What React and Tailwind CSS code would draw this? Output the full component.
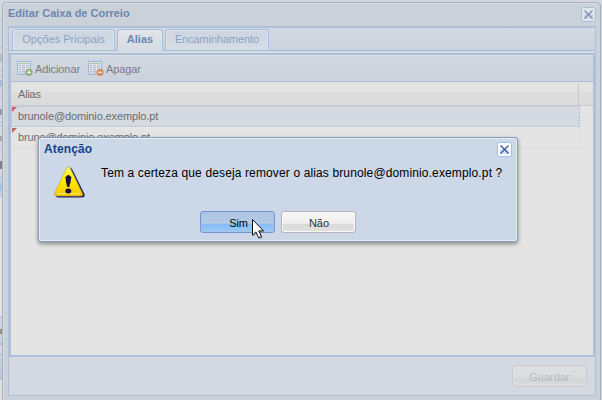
import React from "react";

function CloseBox({ bright }) {
  return (
    <svg className="block h-[15px] w-[15px] shrink-0" viewBox="0 0 15 15">
      <rect x="0.5" y="0.5" width="14" height="14" rx="2" fill={bright ? "#fbfdff" : "#e1e5ea"} stroke={bright ? "#9cc0ec" : "#a9bedb"} />
      <rect x="3" y="7" width="9" height="5" fill={bright ? "#d5e6fa" : "#ccd7e3"} />
      <path d="M3.5 3.5l8 8M11.5 3.5l-8 8" stroke={bright ? "#34539f" : "#7f8db6"} strokeWidth="1.3" />
    </svg>
  );
}

function TableIcon({ remove }) {
  return (
    <svg className="block h-4 w-4 shrink-0" viewBox="0 0 16 16">
      <rect x="0.5" y="1.5" width="13" height="13" fill="#dfe2e6" stroke="#9fb5d5" />
      <path d="M2 3.5h10" stroke="#a6c998" />
      <path d="M2 5.5h2M5 5.5h3M9 5.5h3M2 7.5h2M5 7.5h3M9 7.5h3M2 9.5h2M5 9.5h3M2 11.5h2M5 11.5h3M2 13h2M5 13h3" stroke="#b3bbc8" />
      <circle cx="12" cy="12.3" r="3.6" fill={remove ? "#d98b62" : "#8aae78"} />
      <path d={remove ? "M10 12.3h4" : "M10 12.3h4M12 10.3v4"} stroke="#eceee8" strokeWidth="1.2" />
    </svg>
  );
}

function WarningIcon() {
  return (
    <svg className="block h-8 w-8 shrink-0" viewBox="0 0 32 32">
      <defs>
        <linearGradient id="yellow" x1="0" y1="0" x2="0" y2="1">
          <stop offset="0" stopColor="#fff568" />
          <stop offset="0.45" stopColor="#fff000" />
          <stop offset="1" stopColor="#f3c500" />
        </linearGradient>
      </defs>
      <path d="M14.5 1.8Q17 .8 18.3 3.5L30.5 28Q31.3 31.5 28 31.5H4Q2 31.5 1.5 29Z" fill="#25205c" />
      <path d="M12.8 1.5Q14.5-.2 16.2 2L28.4 27.5Q29.5 30 26.5 30H2.5Q-.5 30 .6 27.2Z" fill="url(#yellow)" stroke="#b5a13b" strokeWidth=".6" />
      <path d="M3 27.6h23" stroke="#ffe75a" strokeWidth="1.3" />
      <path d="M11.5 11.2Q14.3 7 17.2 11.2Q17 16 15.2 21h-1.9Q11.5 16 11.5 11.2Z" fill="#1b113e" />
      <ellipse cx="14.3" cy="25" rx="3" ry="2.5" fill="#1b113e" />
    </svg>
  );
}

function Tab({ label, active, className }) {
  return (
    <div className={`rounded-t-[3px] border border-b-0 border-[#a9bedb] ${active ? "h-[22px] bg-[linear-gradient(#e1e4e7,#d5dce4)] font-bold text-[#6c87b3]" : "h-[21px] bg-[linear-gradient(#ccd5e0,#d7dde5)] text-[#8ba1c4]"} shadow-[inset_1px_1px_#e0e4e8,inset_-1px_0_#e0e4e8] text-center leading-[19px] ${className}`}>
      {label}
    </div>
  );
}

function Row({ text, selected }) {
  return (
    <div className={`relative h-[21px] w-[569px] border pl-[6px] leading-[18px] tracking-[-0.115px] text-[#6c6c6c] ${selected ? "border-dotted border-[#b3bacb] bg-[#d4d9e2]" : "border-[#dcdcdc] border-t-[#e8e8e8] border-l-transparent"}`}>
      <span className="absolute left-0 top-0 h-[5px] w-[5px] bg-[#cb6060] [clip-path:polygon(0_0,100%_0,0_100%)]" />
      {text}
    </div>
  );
}

export default function App() {
  return (
    <div className="relative flex h-[400px] w-[602px] overflow-hidden bg-[#c7ced8] font-['Liberation_Sans',Arial,sans-serif] text-[11px]">
      <div className="flex h-[400px] w-[2px] shrink-0 flex-col bg-[#d3d8df]">
        <div className="h-[20px] border-b border-[#b3c3d8]" />
        <div className="h-[28px] border-b border-[#b3c3d8] bg-[#cdd5df]" />
        <div className="mt-[6px] h-[8px] bg-[#b4bdcb]" />
        <div className="mt-[8px] h-[7px] border-y border-[#a9bedb]" />
        <div className="mt-[3px] h-[7px] bg-[#a9bbd5]" />
        <div className="mt-[6px] h-[5px] border-y border-[#b3c3d8]" />
        <div className="mt-[11px] h-[6px] bg-[#929aa7]" />
        <div className="mt-[7px] h-[4px] border-y border-[#b3c3d8]" />
        <div className="mt-[10px] h-[5px] bg-[#a9a9ae]" />
        <div className="mt-[5px] h-[9px] border-t border-[#b3c3d8]" />
        <div className="mt-[6px] h-[8px] bg-[#7c7f86]" />
        <div className="mt-[8px] h-[20px] border-y border-[#a9bedb] bg-[linear-gradient(#d4dae2,#9fc1e3,#d4dae2)]" />
        <div className="h-[119px] bg-[#e2e3e4]" />
        <div className="h-[13px] border-t border-[#a9bedb] bg-[#cbd3dd]" />
        <div className="h-[5px] bg-[#96907f]" />
        <div className="h-[9px] bg-[#cbd3dd]" />
        <div className="h-[2px] bg-[#a9bedb]" />
        <div className="h-[10px] border-b border-[#b6bbc1]" />
        <div className="h-[25px] border-b border-[#a9bedb] bg-[linear-gradient(#cbd3dd,#b9c7db)]" />
        <div className="flex-1 bg-[#dfe0e2]" />
      </div>
      <div className="flex h-[400px] w-[600px] shrink-0 flex-col bg-[#d2d7dd] pt-[2px]">
        <div className="h-[404px] w-[599px] shrink-0 rounded-t-[4px] border border-[#a3b1c2] bg-[#cad1d9] shadow-[inset_1px_1px_#d6dce2] pl-[5px]">
          <div className="flex h-[23px] w-[588px] justify-between">
            <span className="pt-[4px] font-bold leading-[13px] text-[#6d87b1]">Editar Caixa de Correio</span>
            <div className="pt-[4px]"><CloseBox /></div>
          </div>
          <div className="h-[370px] w-[588px] border border-[#aebfda] bg-[#d4d9e1]">
            <div className="h-[330px] border-b-2 border-t border-[#aebfda]">
              <div className="flex h-[23px] items-start border-b border-[#a9bedb] bg-[linear-gradient(#d5d9e1,#cbd3dd)] pl-[3px] pt-[1px]">
                <Tab label="Opções Pricipais" className="w-[103px]" />
                <Tab label="Alias" active className="ml-[2px] w-[46px]" />
                <Tab label="Encaminhamento" className="ml-[2px] w-[104px] tracking-[-0.1px]" />
              </div>
              <div className="h-[2px] bg-[#d5dce4]" />
              <div className="h-[302px] border-x-2 border-t-2 border-[#aebfda] bg-[#e4e4e4]">
                <div className="flex h-[27px] items-center border-b border-[#a9bedb] bg-[linear-gradient(#d1d8e0,#cbd3dd)] pl-[6px] text-[#7c7c7c] shadow-[inset_0_1px_#dce1e6]">
                  <TableIcon />
                  <span className="ml-[2px] mt-[2px] w-[53px] tracking-[-0.1px]">Adicionar</span>
                  <TableIcon remove />
                  <span className="ml-[2px] mt-[2px] tracking-[-0.1px]">Apagar</span>
                </div>
                <div className="flex h-[24px] border-b border-[#cbcbcb] bg-[linear-gradient(#e2e2e2_45%,#dddddd_46%,#dadada)] leading-[25px] text-[#6f6f6f]">
                  <div className="mt-[1px] w-[568px] border-r border-[#c8c8c8] pl-[7px] leading-[23px] tracking-[-0.2px]">Alias</div>
                </div>
                <Row text="brunole@dominio.exemplo.pt" selected />
                <Row text="bruno@dominio.exemplo.pt" />
              </div>
            </div>
            <div className="flex justify-end pr-[8px] pt-[8px]">
              <div className="h-[22px] w-[75px] rounded-[3px] border border-[#c6c8cb] bg-[linear-gradient(#dcdddf_58%,#d2d4d6_59%,#d9dbdd)] text-center leading-[23px] text-[#b8bbc0] shadow-[inset_0_0_0_1px_#dfe0e2]">Guardar</div>
            </div>
          </div>
        </div>
      </div>

      <div className="absolute left-[38px] top-[137px] h-[105px] w-[480px] rounded-[3px] border border-[#849eba] bg-[#ccd8e7] shadow-[inset_0_0_0_1px_#e7eef6,0_2px_4px_rgba(0,0,0,0.4)]">
        <div className="flex h-[20px] justify-between pl-[5px] pr-[5px] pt-[4px]">
          <span className="text-[12px] font-bold leading-[14px] tracking-[0.13px] text-[#15428b]">Atenção</span>
          <CloseBox bright />
        </div>
        <div className="flex h-[53px] pl-[15px] pt-[8px]">
          <WarningIcon />
          <span className="ml-[15px] whitespace-nowrap text-[12px] leading-[14px] tracking-[0.13px] text-black">Tem a certeza que deseja remover o alias brunole@dominio.exemplo.pt ?</span>
        </div>
        <div className="flex gap-[6px] pl-[161px]">
          <div className="h-[22px] w-[75px] rounded-[3px] border border-[#7598cc] bg-[linear-gradient(#adc5e3,#b4cae5_57%,#86bbf4_59%,#9bcafb)] pl-[2px] text-center leading-[23px] tracking-[-0.2px] text-black shadow-[inset_0_0_0_1px_#a9c4e8]">Sim</div>
          <div className="h-[22px] w-[75px] rounded-[3px] border border-[#b3b5b8] bg-[linear-gradient(#f8f8f8,#eeeeee_57%,#dadada_59%,#e0e0e0)] pl-[1px] text-center leading-[23px] text-[#333333] shadow-[inset_0_0_0_1px_#fafafa]">Não</div>
        </div>
      </div>
      <svg className="absolute left-[251px] top-[218px] h-[23px] w-[16px]" viewBox="0 0 16 23">
        <path d="M2.5 3v16l3.5-3.5 3 6 3-1.5-2.7-5.2H14Z" fill="#7d858f" opacity=".5" />
        <path d="M1.5 1.5v15.7l3.4-3.3 2.8 5.9 2.8-1.3-2.8-5.6h4.8Z" fill="white" stroke="#111" strokeWidth="1" />
      </svg>
    </div>
  );
}
